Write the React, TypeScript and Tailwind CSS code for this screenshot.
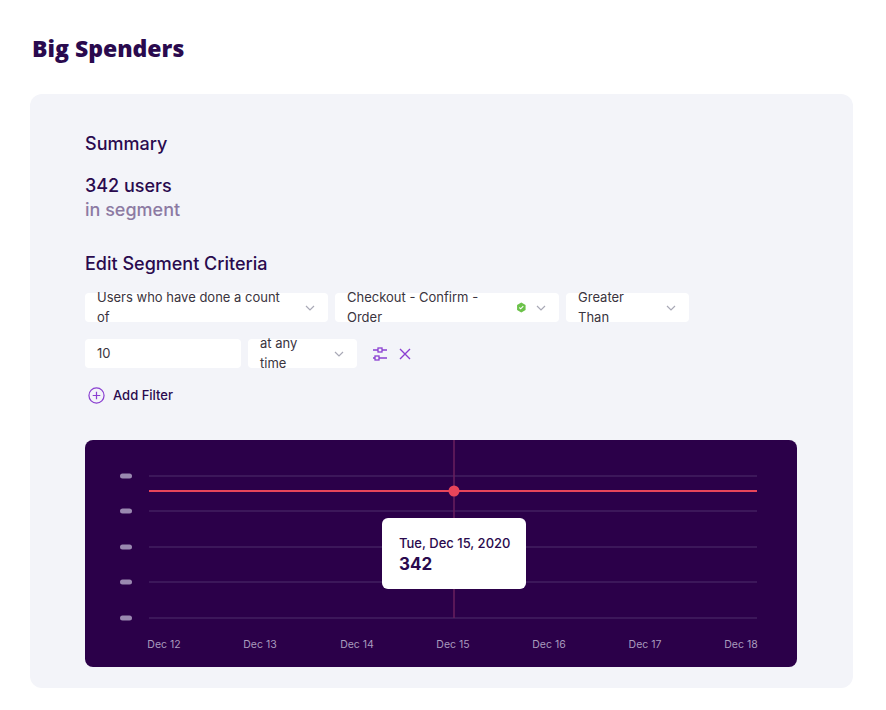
import React from "react";

const Chev = () => (
  <svg width="12" height="12" viewBox="0 0 12 12" className="ml-auto shrink-0"><path d="M2 4l4 4 4-4" fill="none" stroke="#a9a9b6" strokeWidth="1.2" /></svg>
);

function Select({ w, children }: { w: string; children: React.ReactNode }) {
  return (
    <div className={`${w} h-[29px] bg-white rounded flex items-center pl-3 pr-3 gap-2 text-[13px] text-[#3a3440]`}>
      {children}
      <Chev />
    </div>
  );
}

export default function App() {
  const grid = [476, 511, 547, 582, 618];
  const labels = ["Dec 12", "Dec 13", "Dec 14", "Dec 15", "Dec 16", "Dec 17", "Dec 18"];
  const xs = [164, 260, 357, 453, 549, 645, 741];
  return (
    <div className="w-[886px] h-[710px] bg-white text-[#2a0a4e]" style={{ fontFamily: "Inter, 'Noto Sans', sans-serif" }}>
      <h1 className="pt-[33px] pl-[32px] text-[23px] font-black leading-[30px]" style={{ fontFamily: "'Open Sans', Inter, sans-serif" }}>Big Spenders</h1>
      <div className="mt-[31px] ml-[30px] w-[823px] h-[594px] bg-[#f3f4f9] rounded-xl pl-[55px] pt-[38px]">
        <div className="text-[18px] font-medium leading-[24px]">Summary</div>
        <div className="mt-[18px] text-[18px] font-medium leading-[24px]">342 users</div>
        <div className="text-[18px] font-medium leading-[24px] text-[#8c7aa3]">in segment</div>
        <div className="mt-[30px] text-[18px] font-medium leading-[24px]">Edit Segment Criteria</div>
        <div className="mt-[17px] flex gap-[7px]">
          <Select w="w-[243px]">Users who have done a count of</Select>
          <Select w="w-[224px]">
            <span className="flex items-center">
              Checkout - Confirm - Order
              <svg width="11" height="11" viewBox="0 0 12 12" className="ml-[5px]"><path d="M6 0.5l4.8 2.75v5.5L6 11.5 1.2 8.75v-5.5z" fill="#6cc24a" /><path d="M3.8 6l1.5 1.5 2.9-3" fill="none" stroke="white" strokeWidth="1.2" /></svg>
            </span>
          </Select>
          <Select w="w-[123px]">Greater Than</Select>
        </div>
        <div className="mt-[17px] flex items-center gap-[7px]">
          <div className="w-[156px] h-[29px] bg-white rounded flex items-center pl-3 text-[13px] text-[#3a3440]">10</div>
          <Select w="w-[109px]">at any time</Select>
          <svg width="16" height="16" viewBox="0 0 16 16" className="ml-[8px]" fill="none" stroke="#8a3fd1" strokeWidth="1.3">
            <path d="M1 4h5M10 4h5M1 12h2M7 12h8" /><rect x="6" y="2" width="4" height="4" /><rect x="3" y="10" width="4" height="4" />
          </svg>
          <svg width="14" height="14" viewBox="0 0 14 14" className="ml-[3px]" stroke="#8a3fd1" strokeWidth="1.4"><path d="M2 2l10 10M12 2L2 12" /></svg>
        </div>
        <div className="mt-[18px] flex items-center gap-[8px] pl-[3px] text-[13px] font-medium">
          <svg width="17" height="17" viewBox="0 0 18 18" fill="none" stroke="#8a3fd1" strokeWidth="1.3"><circle cx="9" cy="9" r="8" /><path d="M9 5v8M5 9h8" /></svg>
          Add Filter
        </div>
        <div className="relative mt-[34px] w-[712px] h-[227px] bg-[#2b0049] rounded-lg overflow-hidden">
          <svg width="712" height="227" className="absolute inset-0">
            {grid.map((y) => (
              <g key={y}>
                <line x1="64" x2="672" y1={y - 440} y2={y - 440} stroke="#4e2f6c" strokeWidth="1" />
                <rect x="35" y={y - 442.5} width="12" height="5" rx="2.5" fill="#9a88b0" />
              </g>
            ))}
            <line x1="369" x2="369" y1="0" y2="178" stroke="#6a1f5e" strokeWidth="1.5" />
            <line x1="64" x2="672" y1="51" y2="51" stroke="#e8455a" strokeWidth="2" />
            <circle cx="369" cy="51" r="5.5" fill="#e8455a" />
            {labels.map((l, i) => (
              <text key={l} x={xs[i] - 85} y="208" textAnchor="middle" fontSize="10.5" fill="#a99bbd" fontFamily="Inter, sans-serif">{l}</text>
            ))}
          </svg>
          <div className="absolute left-[297px] top-[78px] w-[144px] h-[71px] bg-white rounded-md pl-[17px] pt-[17px]">
            <div className="text-[13px] font-medium leading-[16px]">Tue, Dec 15, 2020</div>
            <div className="text-[17px] font-bold leading-[22px] mt-[2px]">342</div>
          </div>
        </div>
      </div>
    </div>
  );
}
